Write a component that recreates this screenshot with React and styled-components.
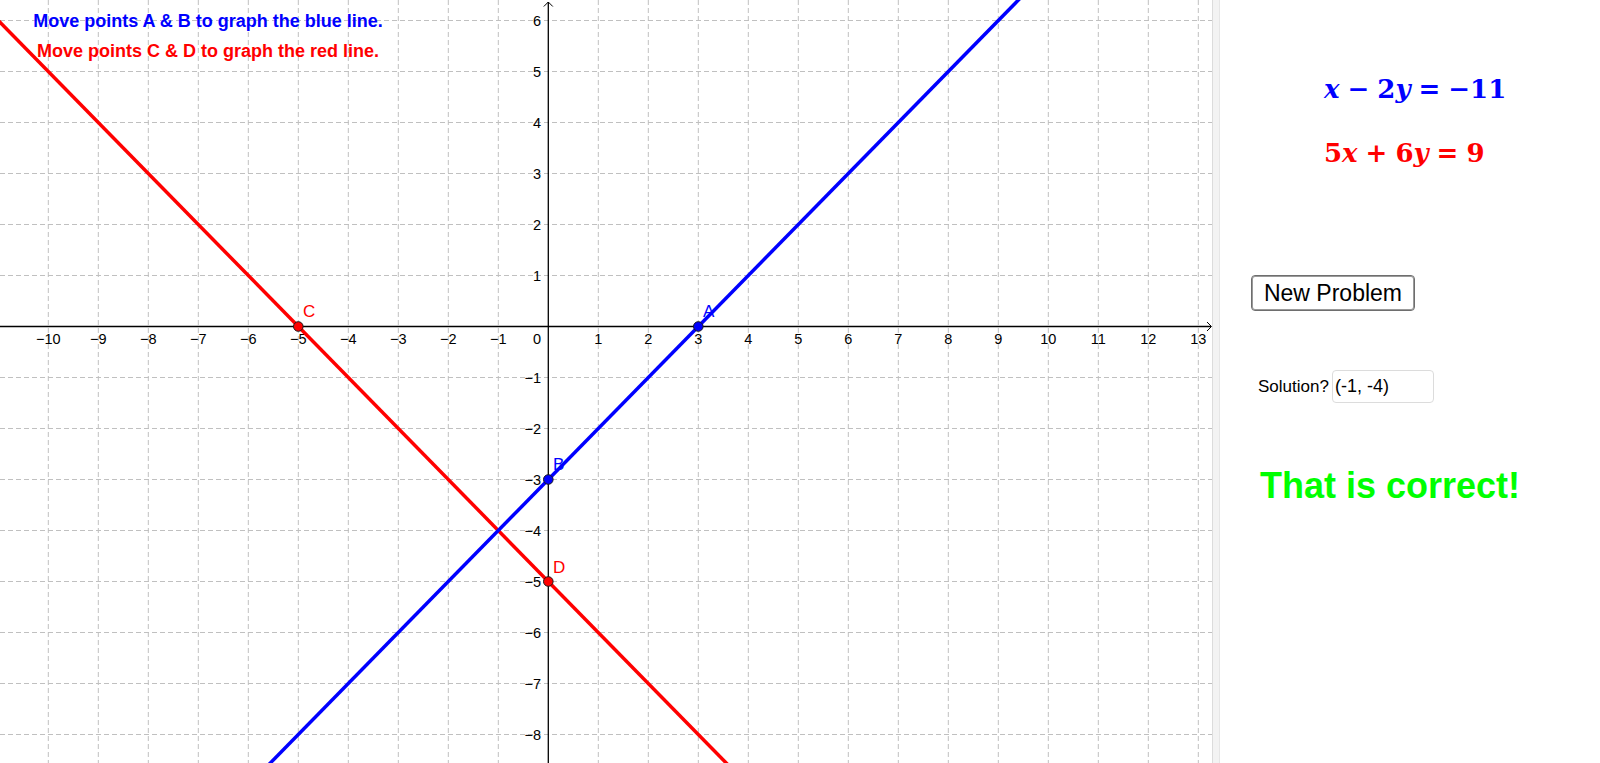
import React from 'react';
import styled, { createGlobalStyle } from 'styled-components';

const GlobalStyle = createGlobalStyle`
	html, body {
		margin: 0;
		padding: 0;
		background: #fff;
		overflow: hidden;
		font-family: "Liberation Sans", Arial, sans-serif;
	}
`;

// graph view geometry, measured from the applet
const VIEW_W = 1212;
const VIEW_H = 763;
const ORIGIN_X = 548.3;
const ORIGIN_Y = 326.5;
const UNIT_X = 50;
const UNIT_Y = 51;

const sx = x => ORIGIN_X + x * UNIT_X;
const sy = y => ORIGIN_Y - y * UNIT_Y;

const Page = styled.div`
	display: flex;
	width: 1600px;
	height: 763px;
`;

const GraphView = styled.div`
	position: relative;
	width: ${VIEW_W}px;
	height: ${VIEW_H}px;
	flex: none;
`;

const Instructions = styled.div`
	position: absolute;
	top: 6px;
	left: 0;
	width: 416px;
	text-align: center;
	font-weight: bold;
	font-size: 18px;
	line-height: 30px;
`;

const Hint = styled.div`
	color: ${p => p.color};
	white-space: nowrap;
`;

const Divider = styled.div`
	width: 6px;
	flex: none;
	background: #f3f3f3;
	border-left: 1px solid #dcdcdc;
	border-right: 1px solid #e6e6e6;
`;

const SidePanel = styled.div`
	flex: 1;
	display: flex;
	flex-direction: column;
	align-items: flex-start;
	padding-left: 31px;
`;

const Equation = styled.div`
	margin-top: ${p => p.top}px;
	margin-left: 73px;
	color: ${p => p.color};
	font-family: "DejaVu Serif", "Liberation Serif", serif;
	font-weight: bold;
	font-size: 26px;
	line-height: 30px;
	white-space: nowrap;
`;

const Var = styled.i`
	font-style: italic;
`;

const Op = styled.span`
	padding: 0 8px;
`;

const Button = styled.button`
	margin-top: 107px;
	height: 36px;
	width: 164px;
	padding: 0;
	background: #fff;
	border: 1px solid #6e6e6e;
	border-radius: 4px;
	box-shadow: inset 0 0 0 1px #9a9a9a;
	font-family: "Liberation Sans", Arial, sans-serif;
	font-size: 23px;
	color: #000;
`;

const SolutionRow = styled.div`
	margin-top: 59px;
	margin-left: 7px;
	display: flex;
	align-items: center;
	font-size: 17px;
`;

const Answer = styled.div`
	width: 98px;
	height: 31px;
	margin-left: 3px;
	padding-left: 2px;
	display: flex;
	align-items: center;
	border: 1px solid #dcdcdc;
	border-radius: 4px;
	font-size: 18px;
`;

const Verdict = styled.div`
	margin-top: 63px;
	margin-left: 9px;
	color: #00ff00;
	font-weight: bold;
	font-size: 36px;
	line-height: 40px;
	white-space: nowrap;
`;

const xTicks = [];
for (let k = -11; k <= 14; k++) xTicks.push(k);
const yTicks = [];
for (let k = -9; k <= 6; k++) yTicks.push(k);

const fmt = n => (n < 0 ? '\u2212' + Math.abs(n) : String(n));

const lineThrough = (m, b) => {
	const x0 = -12;
	const x1 = 14;
	return { x1: sx(x0), y1: sy(m * x0 + b), x2: sx(x1), y2: sy(m * x1 + b) };
};

const points = [
	{ name: 'A', x: 3, y: 0, color: '#0000ff', lx: 703, ly: 317 },
	{ name: 'B', x: 0, y: -3, color: '#0000ff', lx: 553, ly: 470 },
	{ name: 'C', x: -5, y: 0, color: '#ff0000', lx: 303, ly: 317 },
	{ name: 'D', x: 0, y: -5, color: '#ff0000', lx: 553, ly: 573 },
];

const Graph = () => (
	<svg width={VIEW_W} height={VIEW_H} style={{ display: 'block' }}>
		<g stroke="#c0c0c0" strokeWidth="1" strokeDasharray="5 3">
			{xTicks.filter(k => k !== 0).map(k => (
				<line key={'gx' + k} x1={sx(k)} y1={0} x2={sx(k)} y2={VIEW_H} />
			))}
			{yTicks.filter(k => k !== 0).map(k => (
				<line key={'gy' + k} x1={0} y1={sy(k)} x2={VIEW_W} y2={sy(k)} />
			))}
		</g>

		<g stroke="#000" strokeWidth="1.3" fill="none">
			<line x1={0} y1={ORIGIN_Y} x2={1211} y2={ORIGIN_Y} />
			<polyline points={`1207,${ORIGIN_Y - 4.5} 1211.5,${ORIGIN_Y} 1207,${ORIGIN_Y + 4.5}`} strokeWidth="1" />
			<line x1={ORIGIN_X} y1={2} x2={ORIGIN_X} y2={VIEW_H} />
			<polyline points={`${ORIGIN_X - 4.5},6.5 ${ORIGIN_X},2 ${ORIGIN_X + 4.5},6.5`} strokeWidth="1" />
		</g>

		<g fontFamily="Liberation Sans, Arial, sans-serif" fontSize="14.5" fill="#000">
			{xTicks.filter(k => k !== 0 && k >= -10 && k <= 13).map(k => (
				<text key={'lx' + k} x={sx(k)} y={344} textAnchor="middle">{fmt(k)}</text>
			))}
			<text x={541} y={344} textAnchor="end">0</text>
			{yTicks.filter(k => k !== 0 && k >= -8).map(k => (
				<text key={'ly' + k} x={541} y={sy(k) + 5} textAnchor="end">{fmt(k)}</text>
			))}
		</g>

		<line {...lineThrough(-1, -5)} stroke="#ff0000" strokeWidth="3.5" />
		<line {...lineThrough(1, -3)} stroke="#0000ff" strokeWidth="3.5" />

		{points.map(p => (
			<g key={p.name}>
				<circle cx={sx(p.x)} cy={sy(p.y)} r="4.8" fill={p.color} stroke="#1a1a1a" strokeWidth="1" />
				<text x={p.lx} y={p.ly} fill={p.color} fontFamily="Liberation Sans, Arial, sans-serif" fontSize="17">{p.name}</text>
			</g>
		))}
	</svg>
);

export default function App() {
	return (
		<Page>
			<GlobalStyle />
			<GraphView>
				<Graph />
				<Instructions>
					<Hint color="#0000ff">Move points A &amp; B to graph the blue line.</Hint>
					<Hint color="#ff0000">Move points C &amp; D to graph the red line.</Hint>
				</Instructions>
			</GraphView>
			<Divider />
			<SidePanel>
				<Equation top={74} color="#0000ff">
					<Var>x</Var><Op>−</Op>2<Var>y</Var><Op>=</Op>−11
				</Equation>
				<Equation top={34} color="#ff0000">
					5<Var>x</Var><Op>+</Op>6<Var>y</Var><Op>=</Op>9
				</Equation>
				<Button>New Problem</Button>
				<SolutionRow>
					Solution?
					<Answer>(-1, -4)</Answer>
				</SolutionRow>
				<Verdict>That is correct!</Verdict>
			</SidePanel>
		</Page>
	);
}
